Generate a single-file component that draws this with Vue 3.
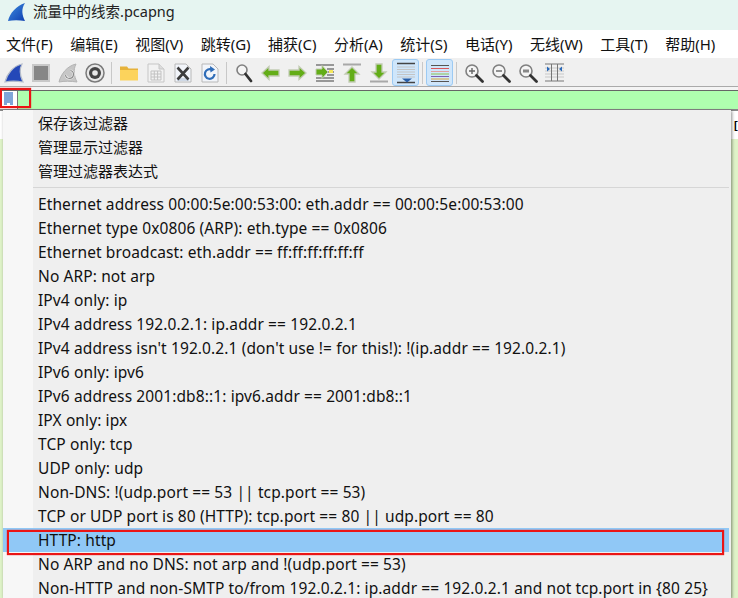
<template>
  <div class="window">
    <header class="titlebar">
      <svg class="logo" width="20" height="20" viewBox="0 0 20 20">
        <defs>
          <linearGradient id="fin" x1="0" y1="0" x2="1" y2="1">
            <stop offset="0" stop-color="#3f8fe0" />
            <stop offset="1" stop-color="#0f3fb0" />
          </linearGradient>
        </defs>
        <path d="M1 19C3 11 9 4 18 1C14 7 15 13 18 19C12 18 6 18 1 19Z" fill="url(#fin)" />
      </svg>
      <span class="title">流量中的线索.pcapng</span>
    </header>

    <nav class="menubar">
      <span v-for="m in menus" :key="m">{{ m }}</span>
    </nav>

    <div class="toolbar">
      <div class="tool">
        <svg width="20" height="20" viewBox="0 0 20 20"><path d="M1 19C3 11 9 3 18 1C15 7 16 13 19 19C13 18 6 18 1 19Z" fill="#2448b8" stroke="#b4bccb" stroke-width="1.200" /></svg>
      </div>
      <div class="tool">
        <svg width="18" height="18" viewBox="0 0 18 18"><rect x="1" y="1" width="16" height="16" fill="#868686" stroke="#c8c8c8" stroke-width="2" /></svg>
      </div>
      <div class="tool">
        <svg width="20" height="20" viewBox="0 0 20 20"><path d="M1 19C3 11 9 3 18 1C15 7 16 13 19 19C13 18 6 18 1 19Z" fill="#c6c6c6" stroke="#b4b4b4" /><path d="M7.500 12a4 4 0 1 0 5-4.500" fill="none" stroke="#f4f4f4" stroke-width="2.200" /><path d="M7.500 12a4 4 0 1 0 5-4.500" fill="none" stroke="#8a8a8a" stroke-width="1.200" /></svg>
      </div>
      <div class="tool">
        <svg width="20" height="20" viewBox="0 0 20 20"><circle cx="10" cy="10" r="9" fill="#e8e8e8" stroke="#7a7a7a" stroke-width="1.500" /><circle cx="10" cy="10" r="6" fill="#444" /><circle cx="10" cy="10" r="2.800" fill="#e8e8e8" /></svg>
      </div>
      <i class="sep"></i>
      <div class="tool">
        <svg width="20" height="18" viewBox="0 0 20 18"><path d="M1 5V2.500h7L9.500 4.500H19V8H1Z" fill="#e6b23a" /><rect x="1" y="6" width="18" height="10.500" fill="#fcd35c" /></svg>
      </div>
      <div class="tool">
        <svg width="18" height="20" viewBox="0 0 18 20"><path d="M1 1h11l5 5v13H1Z" fill="#f2f2f2" stroke="#c6c6c6" /><path d="M12 1v5h5" fill="#dcdcdc" stroke="#c6c6c6" /><path d="M4 8h10v9H4ZM4 11h10M4 14h10M7.300 8v9M10.600 8v9" fill="none" stroke="#c2c2c2" /></svg>
      </div>
      <div class="tool">
        <svg width="18" height="20" viewBox="0 0 18 20"><path d="M1 1h11l5 5v13H1Z" fill="#f2f5fa" stroke="#b8b8b8" /><path d="M3 15h12v3H3Z" fill="#cfd9e6" /><path d="M3.500 4.500l11 12M14.500 4.500l-11 12" stroke="#3d3d3d" stroke-width="2.600" /></svg>
      </div>
      <div class="tool">
        <svg width="18" height="20" viewBox="0 0 18 20"><path d="M1 1h11l5 5v13H1Z" fill="#f2f5fa" stroke="#b8b8b8" /><path d="M13.500 11a4.800 4.800 0 1 1-2.500-4.200" fill="none" stroke="#2f6db8" stroke-width="2.200" /><path d="M9 3l5 3.500L9.500 9.500Z" fill="#2f6db8" /></svg>
      </div>
      <i class="sep"></i>
      <div class="tool">
        <svg width="18" height="20" viewBox="0 0 18 20"><circle cx="7" cy="7" r="5" fill="#f5f5f5" stroke="#808080" stroke-width="1.600" /><path d="M10.500 11l5.500 7" stroke="#333" stroke-width="2.800" stroke-linecap="round" /></svg>
      </div>
      <div class="tool">
        <svg width="19" height="16" viewBox="0 0 19 16"><path d="M1 8l7-6.500V5h10v6H8v3.500Z" fill="#63ad17" stroke="#c2cbb4" stroke-width="1.300" /></svg>
      </div>
      <div class="tool">
        <svg width="19" height="16" viewBox="0 0 19 16"><path d="M18 8l-7-6.500V5H1v6h10v3.500Z" fill="#63ad17" stroke="#c2cbb4" stroke-width="1.300" /></svg>
      </div>
      <div class="tool">
        <svg width="20" height="20" viewBox="0 0 20 20"><path d="M1 2h18M12 6h7M12 9h7M12 12h7M1 15h18M1 18h18" stroke="#3e3e3e" stroke-width="1.200" /><path d="M1 12V6h6V2.500l6 6.500-6 6.500V12Z" fill="#63ad17" stroke="#c2cbb4" /><rect x="14" y="7" width="4" height="3" fill="#f6e85c" /></svg>
      </div>
      <div class="tool">
        <svg width="18" height="20" viewBox="0 0 18 20"><path d="M0 1.500h18" stroke="#a8a8a8" stroke-width="2" /><path d="M9 4l7 7h-4v8H6v-8H2Z" fill="#63ad17" stroke="#c2cbb4" stroke-width="1.300" /></svg>
      </div>
      <div class="tool">
        <svg width="18" height="20" viewBox="0 0 18 20"><path d="M0 18.500h18" stroke="#a8a8a8" stroke-width="2" /><path d="M9 16l7-7h-4V1H6v8H2Z" fill="#63ad17" stroke="#c2cbb4" stroke-width="1.300" /></svg>
      </div>
      <div class="tool on">
        <svg width="20" height="22" viewBox="0 0 20 22"><path d="M1 1.500h18M1 20.500h18" stroke="#444" stroke-width="1.400" /><path d="M1 5h18M1 7.500h18M1 10h18M1 12.500h18M1 15h18" stroke="#c4c4c4" /><path d="M6 16.500h10l-5 4Z" fill="#2a5fa8" /></svg>
      </div>
      <i class="sep"></i>
      <div class="tool on">
        <svg width="20" height="20" viewBox="0 0 20 20">
          <path d="M1 2.500h18" stroke="#555" /><path d="M1 5.500h18" stroke="#d8585c" /><path d="M1 8.500h18" stroke="#e2a0a0" /><path d="M1 11h18" stroke="#8cc050" /><path d="M1 13.500h18" stroke="#7d62b0" /><path d="M1 16h18" stroke="#d9a83c" /><path d="M1 18.500h18" stroke="#555" />
        </svg>
      </div>
      <i class="sep"></i>
      <div class="tool">
        <svg width="20" height="20" viewBox="0 0 20 20"><circle cx="8" cy="8" r="6" fill="#f5f5f5" stroke="#808080" stroke-width="1.600" /><path d="M5 8h6M8 5v6" stroke="#666" stroke-width="1.400" /><path d="M12.500 12.500l6 6" stroke="#333" stroke-width="2.800" stroke-linecap="round" /></svg>
      </div>
      <div class="tool">
        <svg width="20" height="20" viewBox="0 0 20 20"><circle cx="8" cy="8" r="6" fill="#f5f5f5" stroke="#808080" stroke-width="1.600" /><path d="M5 8h6" stroke="#666" stroke-width="1.400" /><path d="M12.500 12.500l6 6" stroke="#333" stroke-width="2.800" stroke-linecap="round" /></svg>
      </div>
      <div class="tool">
        <svg width="20" height="20" viewBox="0 0 20 20"><circle cx="8" cy="8" r="6" fill="#f5f5f5" stroke="#808080" stroke-width="1.600" /><rect x="5" y="6.500" width="6" height="3" fill="#888" /><path d="M12.500 12.500l6 6" stroke="#333" stroke-width="2.800" stroke-linecap="round" /></svg>
      </div>
      <div class="tool">
        <svg width="19" height="19" viewBox="0 0 19 19"><path d="M0 5h19M0 8h19M0 11h19M0 14h19" stroke="#c8c8c8" /><path d="M0 1h19M0 18h19M6.500 1v17M12.500 1v17" stroke="#777" /><path d="M2 3.500l3 2.500-3 2.500ZM17 3.500l-3 2.500 3 2.500Z" fill="#2a69b8" /></svg>
      </div>
    </div>

    <div class="filterbar">
      <div class="bookmark">
        <svg width="9" height="13" viewBox="0 0 9 13"><path d="M0 0h9v13H0Z" fill="#7fa6d8" /><rect x="3" y="11" width="3" height="2" fill="#fff" /></svg>
      </div>
      <div class="apply"></div>
    </div>

    <main class="packets">
      <div class="listhead"><span class="clipped">[</span></div>
      <div class="popup">
        <template v-for="(item, i) in items" :key="i">
          <hr v-if="item === '-'" />
          <div v-else class="item" :class="{ hover: item === 'HTTP: http', cn: i < 3 }">{{ item }}</div>
        </template>
      </div>
    </main>

    <div class="mark mark-filter"></div>
    <div class="mark mark-http"></div>
  </div>
</template>

<script setup>
const menus = ['文件(F)', '编辑(E)', '视图(V)', '跳转(G)', '捕获(C)', '分析(A)', '统计(S)', '电话(Y)', '无线(W)', '工具(T)', '帮助(H)']

const items = [
  '保存该过滤器',
  '管理显示过滤器',
  '管理过滤器表达式',
  '-',
  'Ethernet address 00:00:5e:00:53:00: eth.addr == 00:00:5e:00:53:00',
  'Ethernet type 0x0806 (ARP): eth.type == 0x0806',
  'Ethernet broadcast: eth.addr == ff:ff:ff:ff:ff:ff',
  'No ARP: not arp',
  'IPv4 only: ip',
  'IPv4 address 192.0.2.1: ip.addr == 192.0.2.1',
  "IPv4 address isn't 192.0.2.1 (don't use != for this!): !(ip.addr == 192.0.2.1)",
  'IPv6 only: ipv6',
  'IPv6 address 2001:db8::1: ipv6.addr == 2001:db8::1',
  'IPX only: ipx',
  'TCP only: tcp',
  'UDP only: udp',
  'Non-DNS: !(udp.port == 53 || tcp.port == 53)',
  'TCP or UDP port is 80 (HTTP): tcp.port == 80 || udp.port == 80',
  'HTTP: http',
  'No ARP and no DNS: not arp and !(udp.port == 53)',
  'Non-HTTP and non-SMTP to/from 192.0.2.1: ip.addr == 192.0.2.1 and not tcp.port in {80 25}'
]
</script>

<style>
html, body { margin: 0; overflow: hidden; }
</style>

<style scoped>
.window {
  position: relative;
  width: 738px;
  height: 598px;
  overflow: hidden;
  display: flex;
  flex-direction: column;
  background: #fff;
  color: #111;
  font-family: "Noto Sans", "Noto Sans CJK SC", sans-serif;
  font-size: 15px;
}
.titlebar {
  height: 30px;
  box-sizing: border-box;
  display: flex;
  align-items: center;
  gap: 6px;
  padding: 0 0 7px 7px;
  background: #e6f5f1;
  flex: none;
}
.title { font-size: 14.5px; color: #222; padding-bottom: 2px; }
.menubar {
  height: 28px;
  box-sizing: border-box;
  padding: 0 0 2px 6px;
  display: flex;
  align-items: center;
  gap: 17.5px;
  flex: none;
}
.toolbar {
  height: 32px;
  box-sizing: border-box;
  padding-bottom: 3px;
  display: flex;
  align-items: center;
  background: linear-gradient(#f0f0f0 28px, #aaa 28px, #aaa 29px, #f4f4f4 29px);
  flex: none;
}
.tool {
  width: 27px;
  height: 27px;
  display: flex;
  align-items: center;
  justify-content: center;
  box-sizing: border-box;
}
.tool.on {
  background: #cfe6fb;
  border: 1px solid #9ccaf3;
  border-radius: 3px;
}
.sep {
  width: 7px;
  height: 22px;
  background: linear-gradient(#c8c8c8, #c8c8c8) center / 1px 100% no-repeat;
}
.filterbar {
  height: 19px;
  box-sizing: border-box;
  display: flex;
  background: #afffaf;
  border-top: 1px solid #666;
  flex: none;
}
.bookmark {
  width: 18px;
  display: flex;
  justify-content: center;
  padding: 1px 1px 0 0;
  box-sizing: border-box;
  background: #fff;
  border-right: 1px solid #777;
}
.apply { flex: 1; }
.packets {
  position: relative;
  flex: 1;
  background: #dff3c8;
}
.listhead {
  height: 28px;
  background: #fff;
  border-top: 2px solid #888;
}
.clipped {
  position: absolute;
  left: 734px;
  top: 8px;
  font-family: "Liberation Sans", sans-serif;
  font-size: 11px;
  font-weight: 700;
  line-height: 16px;
  color: #000;
}
.popup {
  position: absolute;
  left: 3px;
  top: 1px;
  width: 728px;
  bottom: 0;
  box-sizing: border-box;
  padding-top: 1px;
  overflow: hidden;
  background: linear-gradient(90deg, #f7f7f7 30px, #efefef 30px);
  box-shadow: 1px 1px 3px rgba(0, 0, 0, 0.45);
}
.item {
  height: 24px;
  box-sizing: border-box;
  padding: 2px 0 2px 35px;
  line-height: 20px;
  margin-right: 2px;
  white-space: nowrap;
  font-size: 15.5px;
  letter-spacing: 0.11px;
}
.item:last-child { height: 22px; padding-bottom: 0; }
.item.cn { font-size: 15px; letter-spacing: 0; }
.item.hover { background: #90c8f6; }
hr {
  height: 1px;
  margin: 4px 2px 4px 30px;
  border: 0;
  background: #d6d6d6;
}
.mark {
  position: absolute;
  box-sizing: border-box;
  border: 2px solid #ea1515;
  box-shadow: 0 0 1px #ea1515;
}
.mark-filter { left: 0; top: 88px; width: 31px; height: 20px; }
.mark-http { left: 7px; top: 530px; width: 717px; height: 25px; }
</style>
